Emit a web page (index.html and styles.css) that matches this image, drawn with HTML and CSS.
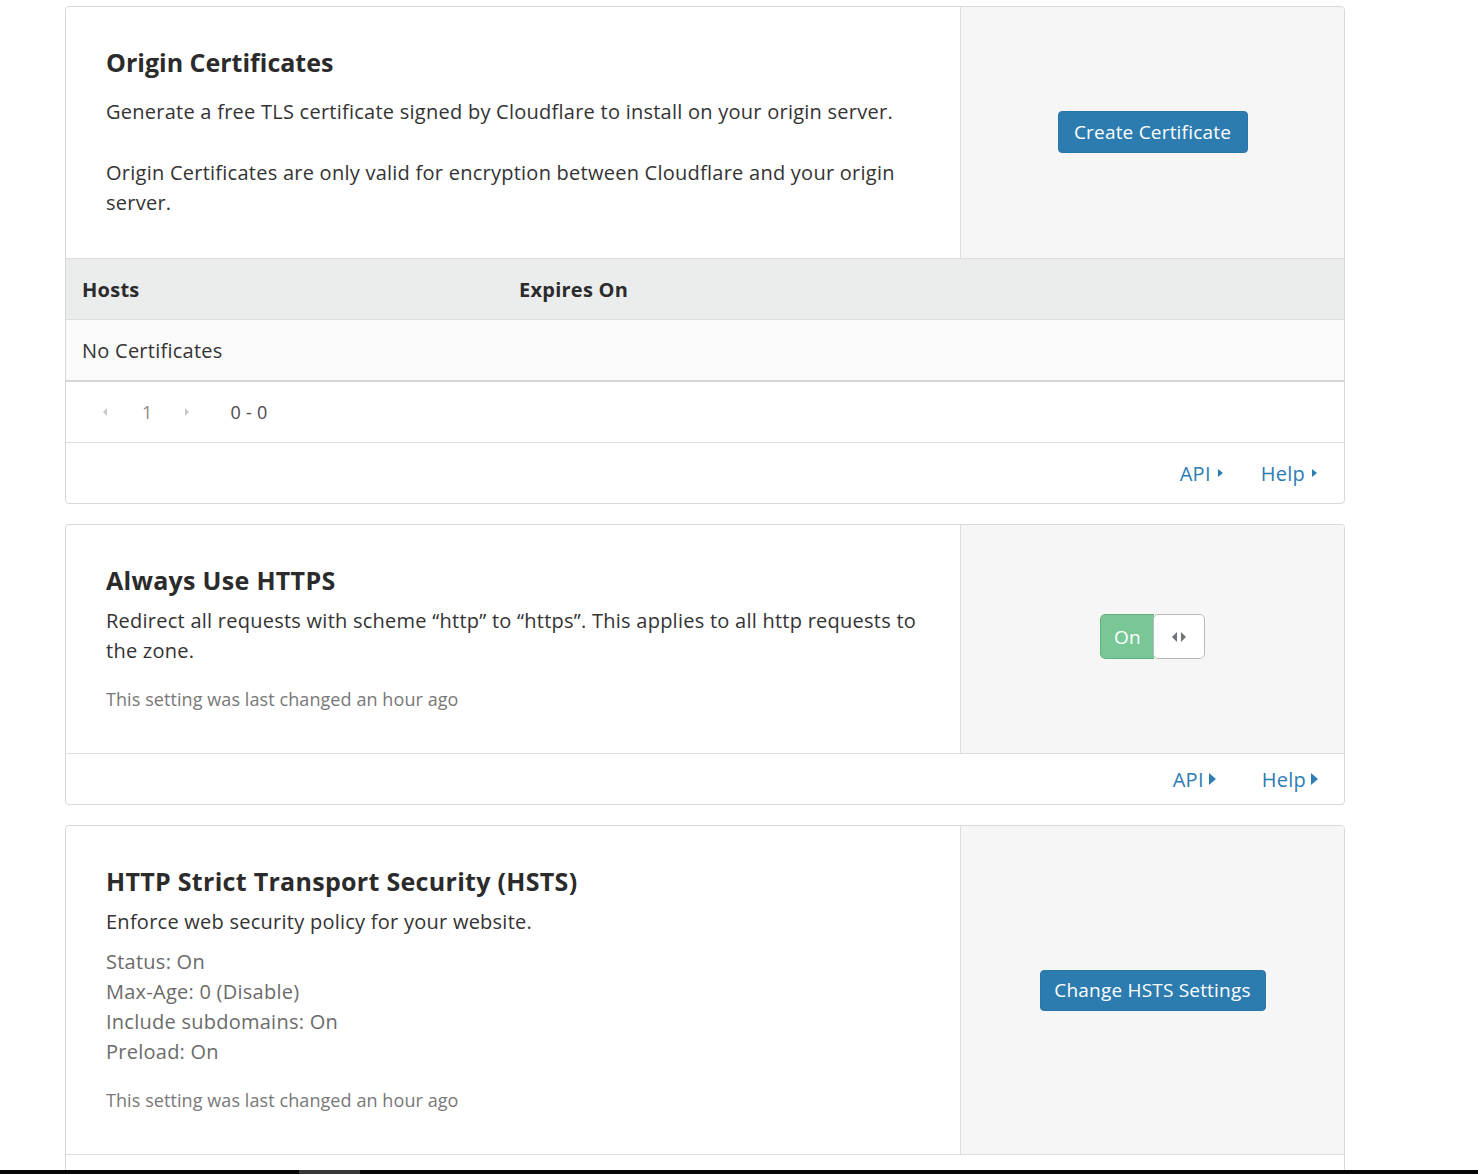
FILE: index.html
```html
<!DOCTYPE html>
<html lang="en">
<head>
<meta charset="utf-8">
<title>SSL/TLS</title>
<link rel="stylesheet" href="styles.css">
</head>
<body>
<main class="page">

  <section class="card">
    <div class="card-main">
      <div class="card-body">
        <h2 class="card-title card-title--spaced">Origin Certificates</h2>
        <p class="card-text card-text--gap">Generate a free TLS certificate signed by Cloudflare to install on your origin server.</p>
        <p class="card-text">Origin Certificates are only valid for encryption between Cloudflare and your origin server.</p>
      </div>
      <div class="card-aside">
        <button class="btn btn--cert" type="button">Create Certificate</button>
      </div>
    </div>
    <div class="table">
      <div class="table-head">
        <div class="cell cell--hosts">Hosts</div>
        <div class="cell">Expires On</div>
      </div>
      <div class="table-row">
        <div class="cell cell--hosts">No Certificates</div>
      </div>
    </div>
    <div class="pager">
      <span class="tri tri--left tri--muted"></span>
      <span class="pager-page">1</span>
      <span class="tri tri--right tri--muted"></span>
      <span class="pager-range">0 - 0</span>
    </div>
    <div class="card-foot card-foot--tall">
      <a class="link link--api" href="#">API<span class="tri tri--right tri--sm"></span></a>
      <a class="link" href="#">Help<span class="tri tri--right tri--sm"></span></a>
    </div>
  </section>

  <section class="card">
    <div class="card-main">
      <div class="card-body">
        <h2 class="card-title">Always Use HTTPS</h2>
        <p class="card-text">Redirect all requests with scheme “http” to “https”. This applies to all http requests to the zone.</p>
        <p class="card-meta">This setting was last changed an hour ago</p>
      </div>
      <div class="card-aside">
        <div class="toggle">
          <span class="toggle-on">On</span>
          <span class="toggle-knob"><span class="tri tri--left tri--knob"></span><span class="tri tri--right tri--knob"></span></span>
        </div>
      </div>
    </div>
    <div class="card-foot">
      <a class="link link--api2" href="#">API<span class="tri tri--right tri--lg"></span></a>
      <a class="link" href="#">Help<span class="tri tri--right tri--lg"></span></a>
    </div>
  </section>

  <section class="card">
    <div class="card-main">
      <div class="card-body">
        <h2 class="card-title">HTTP Strict Transport Security (HSTS)</h2>
        <p class="card-text">Enforce web security policy for your website.</p>
        <ul class="status-list">
          <li>Status: On</li>
          <li>Max-Age: 0 (Disable)</li>
          <li>Include subdomains: On</li>
          <li>Preload: On</li>
        </ul>
        <p class="card-meta">This setting was last changed an hour ago</p>
      </div>
      <div class="card-aside">
        <button class="btn btn--hsts" type="button">Change HSTS Settings</button>
      </div>
    </div>
    <div class="card-foot"></div>
  </section>

</main>
<div class="hscroll"><div class="hscroll-thumb"></div></div>
</body>
</html>
```

FILE: styles.css
```css
* { box-sizing: border-box; }

html, body {
  margin: 0;
  padding: 0;
  background: #ffffff;
}

body {
  font-family: "Open Sans", "Noto Sans", sans-serif;
  color: #333333;
  font-size: 20px;
  letter-spacing: 0.25px;
}

.page {
  width: 1280px;
  margin-left: 65px;
  padding-top: 6px;
}

.card {
  border: 1px solid #d9d9d9;
  border-radius: 4px;
  background: #ffffff;
  margin-bottom: 20px;
  overflow: hidden;
}

.card-main {
  display: grid;
  grid-template-columns: 895px 1fr;
  border-bottom: 1px solid #dddddd;
}

.card-body {
  padding: 40px;
  border-right: 1px solid #dddddd;
}

.card-aside {
  background: #f6f6f6;
  display: flex;
  align-items: center;
  justify-content: center;
}

.card-title {
  margin: 0 0 10px;
  font-size: 25px;
  line-height: 31px;
  font-weight: 700;
  letter-spacing: 0.3px;
  color: #2b2b2b;
}

.card-title--spaced { margin-bottom: 19px; letter-spacing: 0; }

.card-text {
  margin: 0;
  font-size: 20px;
  line-height: 30px;
  color: #333333;
}

.card-text--gap { margin-bottom: 31px; }

.card-meta {
  margin: 20px 0 0;
  font-size: 18px;
  line-height: 27px;
  letter-spacing: 0.08px;
  color: #787878;
}

.status-list {
  list-style: none;
  margin: 10px 0 0;
  padding: 0;
  font-size: 20px;
  line-height: 30px;
  color: #6b6b6b;
}

.btn {
  font-family: inherit;
  font-size: 19px;
  letter-spacing: 0.2px;
  color: #ffffff;
  background: #2c7cb0;
  border: 1px solid #2a76a8;
  border-radius: 4px;
  cursor: pointer;
}

.btn--cert {
  width: 190px;
  height: 42px;
  padding: 0;
  margin-top: -2px;
}

.btn--hsts {
  width: 226px;
  height: 41px;
  padding: 0;
}

/* table */
.table-head {
  display: grid;
  grid-template-columns: 437px 1fr;
  height: 61px;
  align-items: center;
  background: #ebecec;
  border-bottom: 1px solid #dcdcdc;
  font-weight: 700;
  color: #2b2b2b;
}

.table-row {
  display: grid;
  grid-template-columns: 437px 1fr;
  height: 62px;
  align-items: center;
  background: #fafafa;
  border-bottom: 2px solid #d6d6d6;
}

.cell { padding-left: 16px; }

/* pager */
.pager {
  display: flex;
  align-items: center;
  height: 61px;
  padding-left: 37px;
  border-bottom: 1px solid #dddddd;
  font-size: 18px;
}

.pager-page {
  margin-left: 35px;
  margin-right: 32px;
  color: #8c8c8c;
}

.pager-range {
  margin-left: 42px;
  color: #4a4a4a;
}

/* triangles */
.tri {
  display: inline-block;
  width: 0;
  height: 0;
  border-style: solid;
  border-color: transparent;
}

.tri--muted { border-width: 4px 4px; }
.tri--muted.tri--left { border-right-color: #c8c8c8; border-left-width: 0; }
.tri--muted.tri--right { border-left-color: #c8c8c8; border-right-width: 0; }

.tri--sm {
  border-width: 4px 0 4px 5px;
  border-left-color: currentColor;
  margin-left: 7px;
}

.tri--lg {
  border-width: 6px 0 6px 7px;
  border-left-color: currentColor;
  margin-left: 5px;
}

/* footer links */
.card-foot {
  display: flex;
  justify-content: flex-end;
  align-items: center;
  height: 50px;
  padding-right: 26px;
}

.card-foot--tall {
  height: 60px;
  padding-right: 27px;
}

.link {
  color: #2d7db3;
  text-decoration: none;
  font-size: 20px;
  display: inline-flex;
  align-items: center;
}

.link--api { margin-right: 38px; }
.link--api2 { margin-right: 46px; }

/* toggle */
.toggle {
  display: flex;
  height: 45px;
  margin-top: -5px;
  border-radius: 5px;
  overflow: hidden;
}

.toggle-on {
  width: 54px;
  display: flex;
  align-items: center;
  justify-content: center;
  background: #79c797;
  border: 1px solid #62b27f;
  border-right: none;
  border-radius: 5px 0 0 5px;
  color: #ffffff;
  font-size: 19px;
}

.toggle-knob {
  width: 52px;
  display: flex;
  align-items: center;
  justify-content: center;
  gap: 4px;
  background: #ffffff;
  border: 1px solid #b4b9bc;
  border-radius: 5px;
  margin-left: -1px;
}

.tri--knob.tri--left { border-width: 5px 5px 5px 0; border-right-color: #6e7479; }
.tri--knob.tri--right { border-width: 5px 0 5px 5px; border-left-color: #6e7479; }

/* horizontal scrollbar strip */
.hscroll {
  position: fixed;
  left: 0;
  right: 0;
  bottom: 0;
  height: 4px;
  background: #050505;
}

.hscroll-thumb {
  margin-left: 299px;
  width: 61px;
  height: 4px;
  background: #383838;
}
```
